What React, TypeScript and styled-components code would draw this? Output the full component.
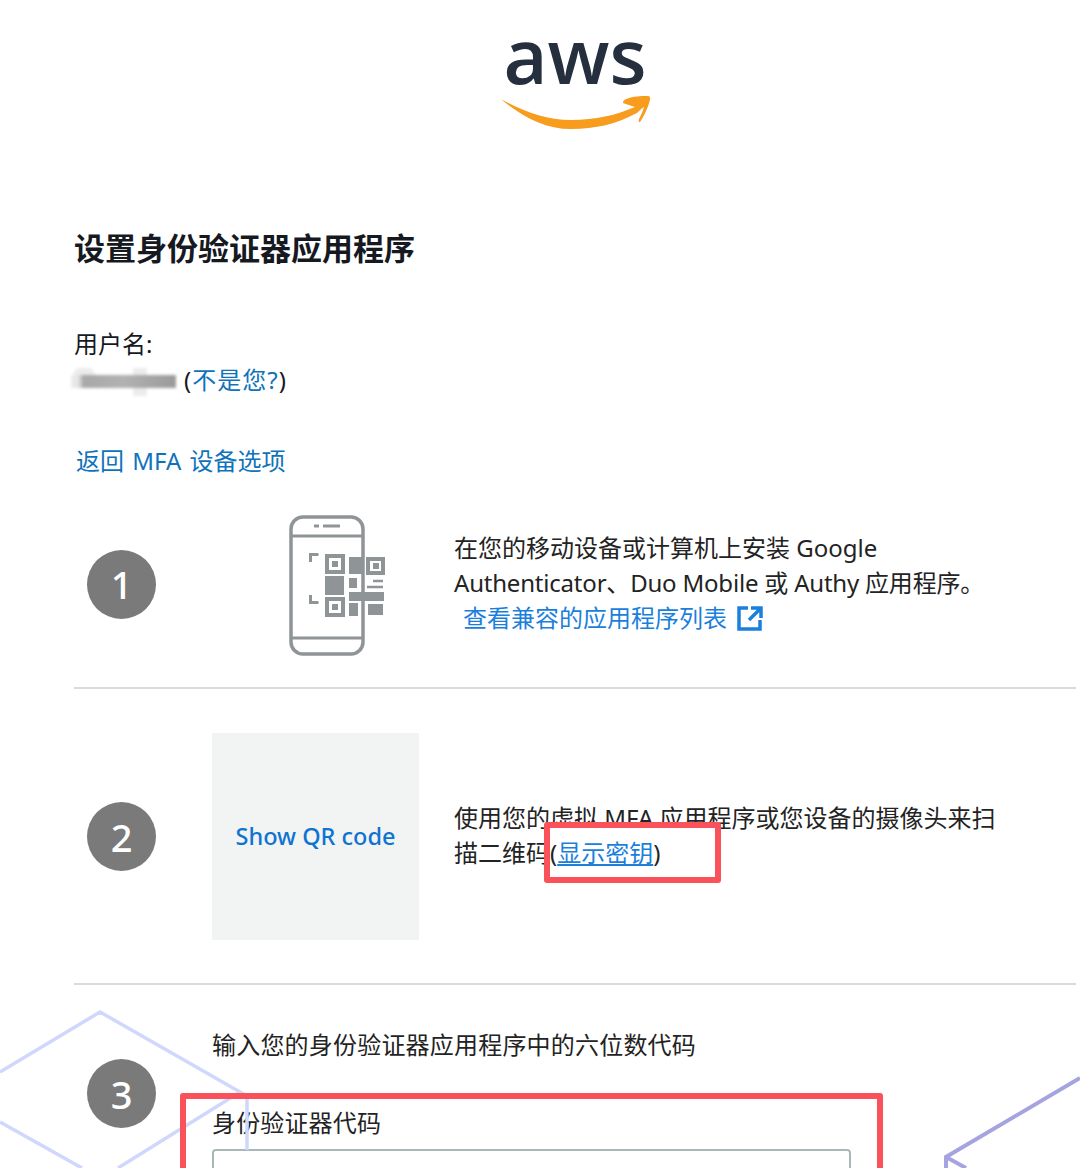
import styled, { createGlobalStyle } from "styled-components";

const GlobalStyle = createGlobalStyle`
  html, body {
    margin: 0;
    background: #fff;
  }
  body {
    font-family: "Noto Sans", "Noto Sans CJK SC", sans-serif;
    color: #16191f;
  }
`;

const PhoneIcon = () => (
  <svg width="100" height="142" viewBox="0 0 100 142" fill="none">
    <rect x="3" y="3" width="72" height="137" rx="12" stroke="#8f9496" strokeWidth="3.5" />
    <path d="M3 22h72M3 124h72" stroke="#8f9496" strokeWidth="3" />
    <path d="M26 12h5M35 12h17" stroke="#8f9496" strokeWidth="3" />
    <path d="M22.500 48v-7.500h8M22.500 81v7.500h8" stroke="#8f9496" strokeWidth="3" />
    <path
      d="M37 40h20v20H37zM41 44v12h12V44zM37 83h20v20H37zM41 87v12h12V87zM78 43h19v18H78zM82 47v10h11V47z"
      fill="#8f9496"
      fillRule="evenodd"
    />
    <path d="M44 47h6v6h-6zM44 90h6v6h-6zM85 49h6v6h-6z" fill="#8f9496" />
    <path
      d="M61 43h14v17H61zM37 62h19v19H37zM61 64h8v10h-8zM61 78h35v9H61zM61 89h9v13h-9zM80 90h15v11H80z"
      fill="#8f9496"
    />
    <path d="M85 67h10M79 73h16" stroke="#8f9496" strokeWidth="2.500" />
  </svg>
);

const ExternalIcon = () => (
  <svg width="26" height="26" viewBox="0 0 26 26" fill="none" stroke="#1b7fdc" strokeWidth="3.5">
    <path d="M11 3H2v21h21v-9" />
    <path d="M12 15 23 4M14 3h10v10" />
  </svg>
);

export default function App() {
  return (
    <Page>
      <GlobalStyle />
      <Logo>
        <LogoWord>aws</LogoWord>
        <svg width="152" height="36" viewBox="0 0 152 36">
          <path
            d="M0 3C22 15 45 24 70 24C95 24 115 19 134 11C128 9 125 8 122 7C122 4 125 3 128 2C135 0 143 0 147 0C149 0 149.500 2 149 4C147 12 143 20 139 26C137.500 26 137.500 25 138 23C140 19 142 15 143 11C141 12 139 14 136 17C115 28 95 33 70 33C44 33 20 20 0 3Z"
            fill="#f79c1c"
          />
        </svg>
      </Logo>

      <Content>
        <Title>设置身份验证器应用程序</Title>
        <UserBlock>
          <div>用户名:</div>
          <UserLine>
            <BlurredName />
            <WhoLine>
              (<TextLink>不是您?</TextLink>)
            </WhoLine>
          </UserLine>
        </UserBlock>
        <BackLink>返回 MFA 设备选项</BackLink>

        <Step $top={33} $bottom={31}>
          <StepNumber>1</StepNumber>
          <Media>
            <PhoneIcon />
          </Media>
          <StepText>
            在您的移动设备或计算机上安装 Google
            <br />
            <TightLine>Authenticator、Duo Mobile 或 Authy 应用程序。</TightLine>
            <br />
            <AppsLink>
              查看兼容的应用程序列表 <ExternalIcon />
            </AppsLink>
          </StepText>
        </Step>

        <Step $top={44} $bottom={43}>
          <StepNumber>2</StepNumber>
          <QrBox>Show QR code</QrBox>
          <StepText>
            使用您的虚拟 MFA 应用程序或您设备的摄像头来扫
            <br />
            描二维码
            <SecretWrap>
              (<SecretLink>显示密钥</SecretLink>)
            </SecretWrap>
          </StepText>
        </Step>

        <LastStep>
          <LastNumber>3</LastNumber>
          <CodeColumn>
            <CodeHint>输入您的身份验证器应用程序中的六位数代码</CodeHint>
            <FieldLabel>身份验证器代码</FieldLabel>
            <CodeInput />
          </CodeColumn>
        </LastStep>
      </Content>

      <Watermark width="1080" height="1168" viewBox="0 0 1080 1168" fill="none">
        <path d="M0 1072 100 1012 240 1092M0 1122 82 1168M118 1168 240 1092 247 1096V1150" stroke="#cfd8fc" strokeWidth="3.500" />
        <path d="M1080 1078 946 1157V1168M946 1157 966 1168" stroke="#a5a3e0" strokeWidth="4" />
      </Watermark>
      <SecretMark />
      <CodeMark />
    </Page>
  );
}

const Page = styled.div`
  position: relative;
  width: 1080px;
  height: 1168px;
  overflow: hidden;
  background: #fff;
`;

const Logo = styled.div`
  display: flex;
  flex-direction: column;
  align-items: center;
  height: 135px;
  padding-top: 3px;
  padding-left: 70px;
  box-sizing: border-box;

  svg {
    margin: -11px 0 0 3px;
  }
`;

const LogoWord = styled.div`
  font-family: "Open Sans", sans-serif;
  font-size: 76px;
  font-weight: 600;
  line-height: 104px;
  color: #252f3e;
`;

const Content = styled.main`
  margin-left: 74px;
  margin-right: 4px;
  padding-top: 92px;
`;

const Title = styled.h1`
  margin: 0;
  font-size: 31px;
  font-weight: 700;
  line-height: 42px;
`;

const UserBlock = styled.div`
  margin-top: 57px;
  font-size: 24px;
  line-height: 36px;
`;

const UserLine = styled.div`
  display: flex;
  align-items: center;
  gap: 8px;
`;

const WhoLine = styled.span`
  letter-spacing: 1px;
`;

const BlurredName = styled.div`
  width: 105px;
  height: 30px;
  margin: 6px 0 0 -3px;
  background:
    linear-gradient(90deg, #ececec, #e4e4e4 7%, #a8a8a8 12%, #b2b2b2 50%, #9c9c9c 95%) 0 7px / 100% 13px no-repeat,
    linear-gradient(#ececec, #ececec) 62px 0 / 14px 28px no-repeat,
    radial-gradient(circle, #ececec 60%, transparent 62%) 0 -4px / 26px 26px no-repeat;
  filter: blur(1.5px);
`;

const TextLink = styled.span`
  color: #0f73bb;
`;

const BackLink = styled.div`
  margin-top: 45px;
  margin-left: 2px;
  font-size: 24px;
  line-height: 36px;
  word-spacing: 2px;
  color: #0f73bb;
`;

const Step = styled.section<{ $top: number; $bottom: number }>`
  display: flex;
  align-items: center;
  padding: ${(p) => p.$top}px 0 ${(p) => p.$bottom}px 13px;
  border-bottom: 2px solid #dadcdc;
`;

const StepNumber = styled.div`
  flex: none;
  display: flex;
  align-items: center;
  justify-content: center;
  width: 69px;
  height: 69px;
  border-radius: 50%;
  background: #7a7a7a;
  color: #fff;
  font-size: 38px;
  font-weight: 500;
  margin-right: 56px;
`;

const Media = styled.div`
  flex: none;
  display: flex;
  width: 242px;
  padding: 2px 0 0 76px;
  box-sizing: border-box;
`;

const StepText = styled.p`
  margin: 0 0 3px;
  font-size: 24px;
  line-height: 35px;
  color: #232323;
  white-space: nowrap;
`;

const TightLine = styled.span`
  letter-spacing: -0.2px;
`;

const AppsLink = styled.span`
  display: inline-flex;
  align-items: center;
  gap: 10px;
  margin-left: 9px;
  color: #1b7fdc;
`;

const QrBox = styled.div`
  flex: none;
  display: flex;
  align-items: center;
  justify-content: center;
  width: 207px;
  height: 207px;
  padding-bottom: 2px;
  margin-right: 35px;
  box-sizing: border-box;
  background: #f2f3f3;
  color: #0f73d0;
  font-size: 23.500px;
  font-weight: 500;
`;

const SecretWrap = styled.span`
  position: relative;
  z-index: 2;
`;

const SecretLink = styled.span`
  color: #1b7fdc;
  text-decoration: underline;
`;

const LastStep = styled.section`
  display: flex;
  padding-left: 13px;
`;

const LastNumber = styled(StepNumber)`
  margin-top: 74px;
`;

const CodeColumn = styled.div`
  flex: 1;
  padding-top: 42px;
`;

const CodeHint = styled.div`
  font-size: 24px;
  line-height: 36px;
  letter-spacing: 0.2px;
  color: #232323;
`;

const FieldLabel = styled.div`
  margin-top: 42px;
  font-size: 24px;
  line-height: 36px;
  letter-spacing: 0.15px;
  color: #232323;
`;

const CodeInput = styled.div`
  width: 639px;
  height: 50px;
  margin-top: 8px;
  box-sizing: border-box;
  border: 2px solid #aab7b8;
  border-radius: 4px;
`;

const Watermark = styled.svg`
  position: absolute;
  inset: 0;
  pointer-events: none;
`;

const SecretMark = styled.div`
  position: absolute;
  z-index: 1;
  left: 544px;
  top: 822px;
  width: 177px;
  height: 61px;
  box-sizing: border-box;
  border: 6px solid #f9525a;
  border-radius: 3px;
  background: #fff;
`;

const CodeMark = styled.div`
  position: absolute;
  left: 180px;
  top: 1093px;
  width: 703px;
  height: 120px;
  box-sizing: border-box;
  border: 6px solid #f9525a;
  border-radius: 3px;
`;
